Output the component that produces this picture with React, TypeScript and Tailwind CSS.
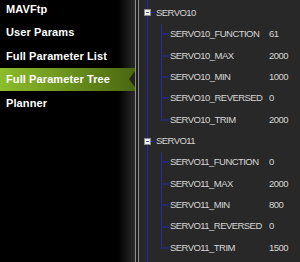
import React from "react";

const MENU = ["MAVFtp", "User Params", "Full Parameter List", "Full Parameter Tree", "Planner"];
const ACTIVE = "Full Parameter Tree";

interface Param {
  name: string;
  value: string;
}

const GROUPS: { name: string; params: Param[] }[] = [
  {
    name: "SERVO10",
    params: [
      { name: "SERVO10_FUNCTION", value: "61" },
      { name: "SERVO10_MAX", value: "2000" },
      { name: "SERVO10_MIN", value: "1000" },
      { name: "SERVO10_REVERSED", value: "0" },
      { name: "SERVO10_TRIM", value: "2000" },
    ],
  },
  {
    name: "SERVO11",
    params: [
      { name: "SERVO11_FUNCTION", value: "0" },
      { name: "SERVO11_MAX", value: "2000" },
      { name: "SERVO11_MIN", value: "800" },
      { name: "SERVO11_REVERSED", value: "0" },
      { name: "SERVO11_TRIM", value: "1500" },
    ],
  },
];

const treeText = "whitespace-nowrap text-[9.5px] tracking-[-0.55px] text-[#d6d6d6]";

function ParamRow({ param, last }: { param: Param; last: boolean }) {
  return (
    <div className="h-[21.36px] flex items-stretch">
      <div className="w-[15px] shrink-0 grid grid-rows-2 grid-cols-1">
        <div className="col-start-1 row-start-1 ml-[6px] border-l border-b border-[#2626b0] w-[8px] translate-y-[0.5px]" />
        {!last && <div className="col-start-1 row-start-2 ml-[6px] border-l border-[#2626b0]" />}
      </div>
      <span className={`w-[99px] shrink-0 self-center ${treeText}`}>{param.name}</span>
      <span className={`self-center ${treeText}`}>{param.value}</span>
    </div>
  );
}

export default function App() {
  return (
    <div className="flex w-[300px] h-[262px] overflow-hidden bg-black font-['Liberation_Sans',Arial,sans-serif]">
      {/* Menu */}
      <div className="w-[135px] h-full shrink-0 bg-[linear-gradient(to_right,#000_0px,#000_118px,#2a2a2a_135px)]">
        <div className="mt-[-3px]">
          {MENU.map((item) => {
            const active = item === ACTIVE;
            return (
              <div
                key={item}
                className={`h-[23.5px] flex items-center ${
                  active ? "bg-[linear-gradient(to_right,#8dbd2b,#4a6710)]" : ""
                }`}
              >
                <span className="flex-1 pl-[6px] text-[11px] font-bold tracking-[0.1px] text-white">{item}</span>
                {active && (
                  <div className="w-0 h-0 border-y-[8px] border-y-transparent border-r-[6px] border-r-[#232323]" />
                )}
              </div>
            );
          })}
        </div>
      </div>

      {/* Splitter */}
      <div className="w-px h-full bg-[#8c8c8c]" />
      <div className="w-[2px] h-full bg-[#1c1c1c]" />
      <div className="w-px h-full bg-[#8c8c8c]" />

      {/* Parameter tree */}
      <div className="flex-1 h-full bg-[#282828] flex">
        <div className="w-[8px] shrink-0" />
        <div className="w-px shrink-0 bg-[#2626b0]" />
        <div className="flex-1 pt-[2.3px]">
          {GROUPS.map((g) => (
            <div key={g.name}>
              <div className="h-[21.36px] flex items-center">
                <div className="ml-[-4px] w-[7px] h-[7px] shrink-0 border border-[#8c8c8c] bg-[#eef0f6] flex items-center justify-center">
                  <div className="w-[3px] h-px bg-[#4a5f8e]" />
                </div>
                <div className="w-[4px] h-px bg-[#2626b0]" />
                <span className={`ml-[1px] ${treeText}`}>{g.name}</span>
              </div>
              <div className="pl-[7px]">
                {g.params.map((p, i) => (
                  <ParamRow key={p.name} param={p} last={i === g.params.length - 1} />
                ))}
              </div>
            </div>
          ))}
        </div>
      </div>
    </div>
  );
}
